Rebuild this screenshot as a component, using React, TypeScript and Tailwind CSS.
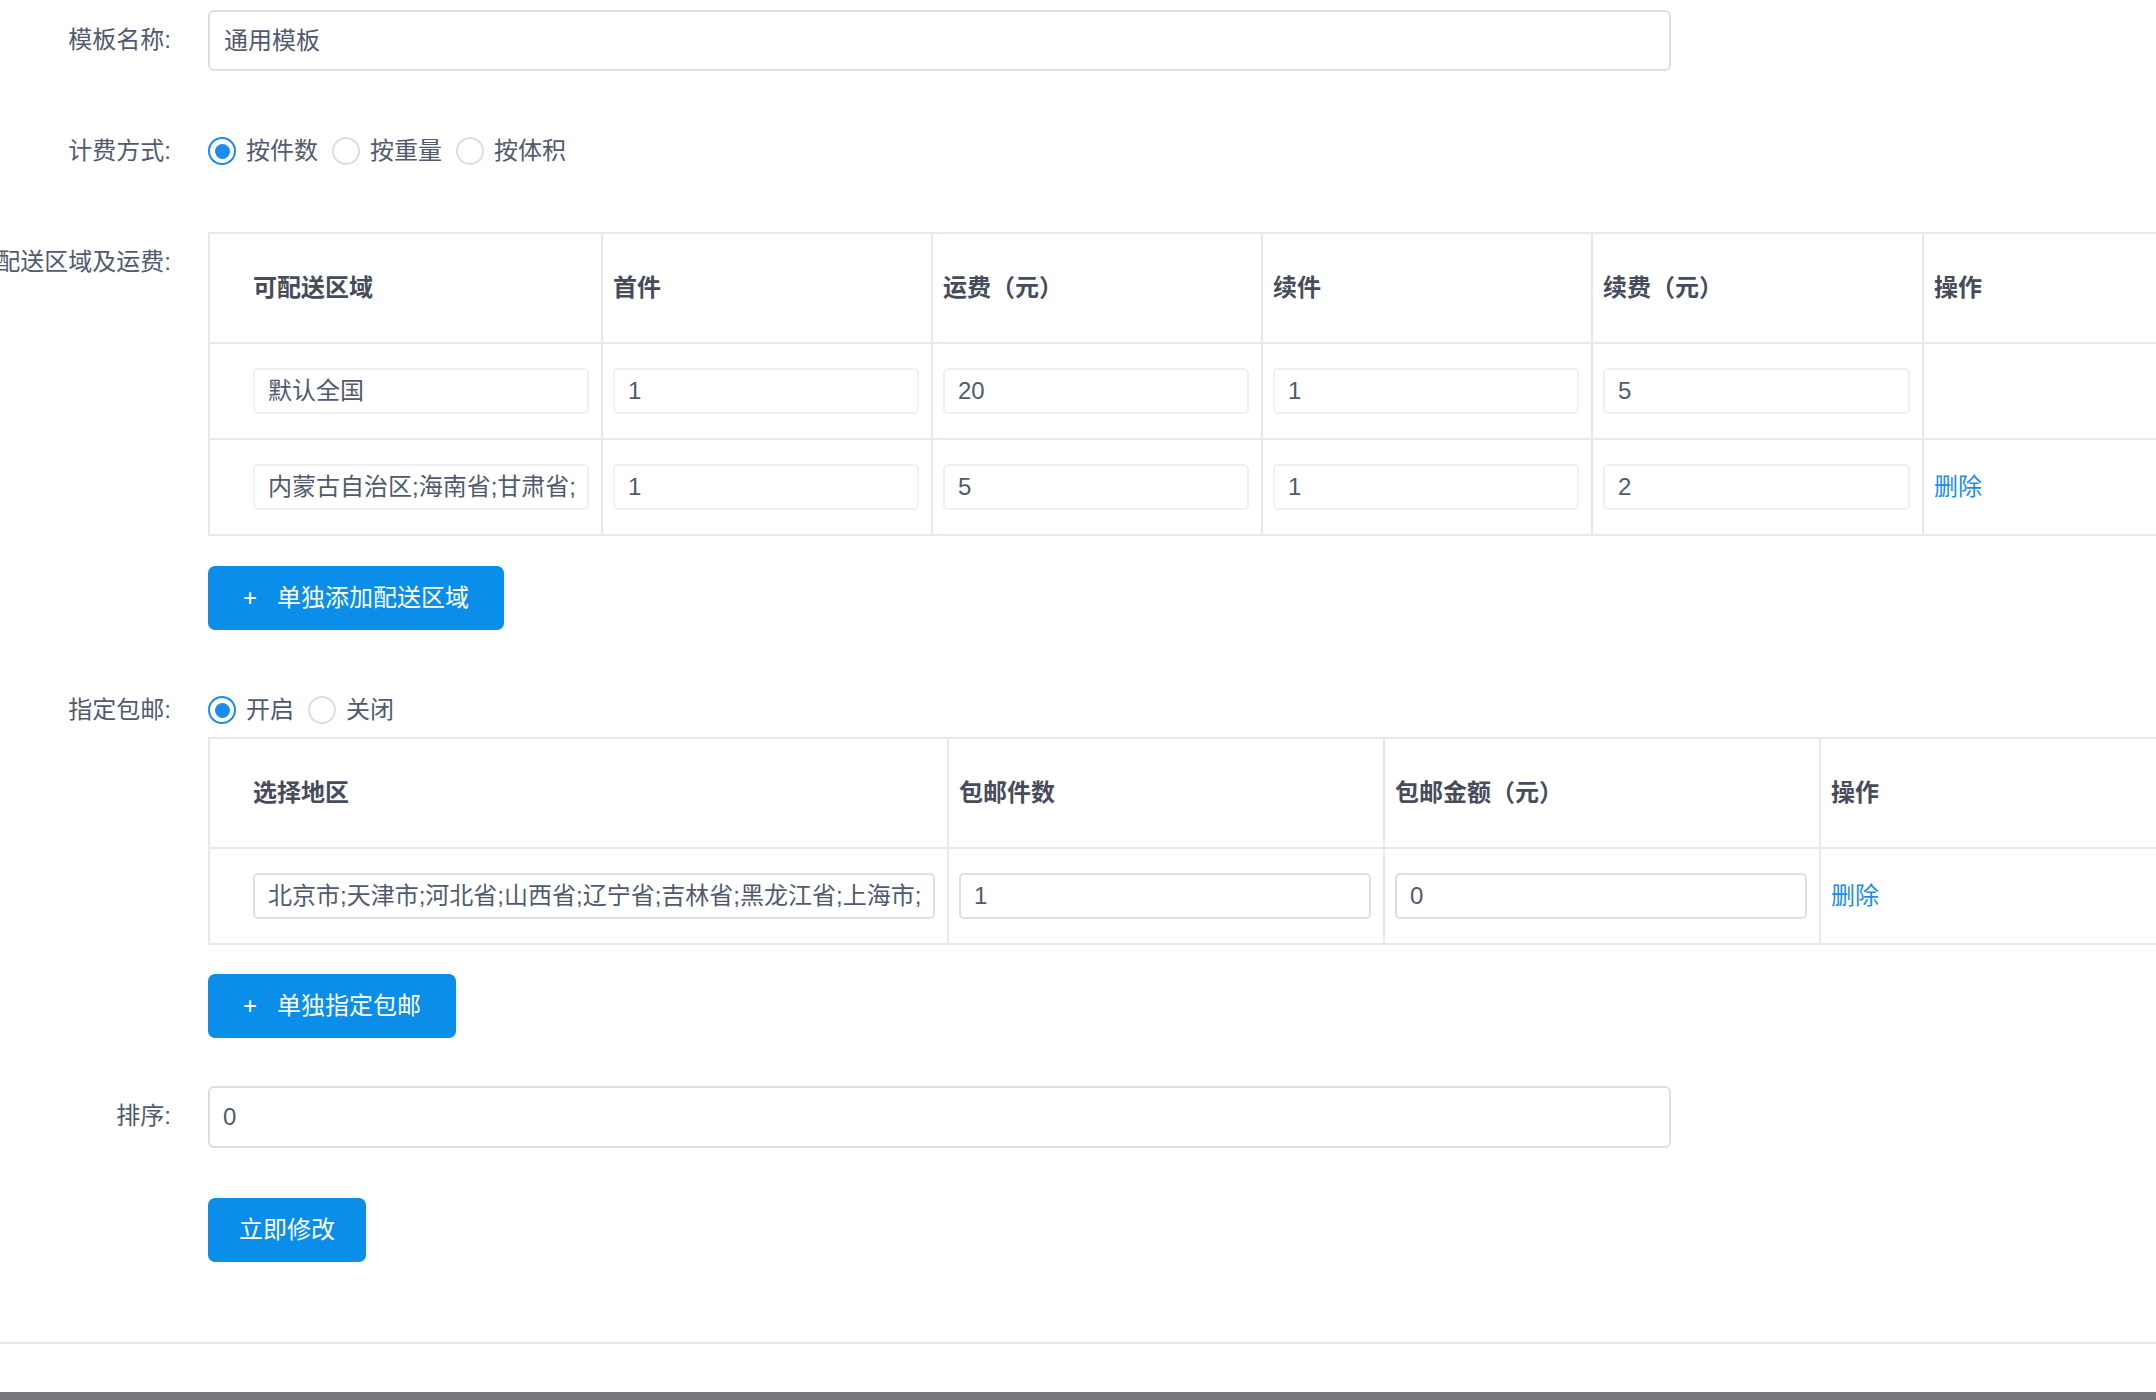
import { ReactNode } from 'react';

const text = 'text-[24px] text-[#515a6e]';

function FormItem({ label, className = '', children }: { label: string; className?: string; children: ReactNode }) {
  return (
    <div className={`flex ${className}`}>
      <div className={`w-[171px] shrink-0 flex justify-end whitespace-nowrap leading-[60px] mr-[37px] ${text}`}>
        {label}
      </div>
      <div className="min-w-0 flex-1">{children}</div>
    </div>
  );
}

function Radio({ checked, label }: { checked?: boolean; label: string }) {
  return (
    <span className="inline-flex items-center mr-[14px]">
      <span
        className={`w-[28px] h-[28px] rounded-full border-2 flex items-center justify-center ${
          checked ? 'border-[#1a8cf0]' : 'border-[#dcdee2]'
        }`}
      >
        {checked && <span className="w-[15px] h-[15px] rounded-full bg-[#1a8cf0]" />}
      </span>
      <span className={`ml-[10px] ${text}`}>{label}</span>
    </span>
  );
}

function CellInput({ value, strong }: { value: string; strong?: boolean }) {
  return (
    <div
      className={`w-full h-[46px] rounded-[5px] border-2 bg-white px-[13px] flex items-center overflow-hidden whitespace-nowrap ${text} ${
        strong ? 'border-[#dcdee2]' : 'border-[#eef0f3]'
      }`}
    >
      {value}
    </div>
  );
}

function Button({ children, className = '' }: { children: ReactNode; className?: string }) {
  return (
    <button
      className={`h-[64px] rounded-[7px] bg-[#0a8eea] text-white text-[24px] inline-flex items-center ${className}`}
    >
      {children}
    </button>
  );
}

const feeRows = [
  { area: '默认全国', first: '1', fee: '20', next: '1', nextFee: '5', del: false },
  { area: '内蒙古自治区;海南省;甘肃省;', first: '1', fee: '5', next: '1', nextFee: '2', del: true },
];

const th = 'h-[110px] border-2 border-[#e6e9ed] text-left align-middle font-semibold text-[24px] text-[#464c5b] pl-[10px] pr-[12px]';
const td = 'h-[96px] border-2 border-[#e6e9ed] align-middle pl-[10px] pr-[12px]';

export default function App() {
  return (
    <div className="relative h-[1400px] w-full overflow-hidden bg-white font-['Liberation_Sans','Noto_Sans_CJK_SC',sans-serif]">
      <div className="pt-[10px]">
        <FormItem label="模板名称:">
          <div className={`w-[1463px] h-[61px] rounded-[6px] border-2 border-[#dcdee2] px-[14px] flex items-center ${text}`}>
            通用模板
          </div>
        </FormItem>

        <FormItem label="计费方式:" className="mt-[50px]">
          <div className="h-[60px] flex items-center">
            <Radio checked label="按件数" />
            <Radio label="按重量" />
            <Radio label="按体积" />
          </div>
        </FormItem>

        <FormItem label="配送区域及运费:" className="mt-[51px]">
          <table className="table-fixed border-collapse w-[2044px]">
            <colgroup>
              <col className="w-[393px]" />
              <col className="w-[330px]" />
              <col className="w-[330px]" />
              <col className="w-[330px]" />
              <col className="w-[331px]" />
              <col className="w-[330px]" />
            </colgroup>
            <thead>
              <tr>
                <th className={`${th} pl-[43px]`}>可配送区域</th>
                <th className={th}>首件</th>
                <th className={th}>运费（元）</th>
                <th className={th}>续件</th>
                <th className={th}>续费（元）</th>
                <th className={th}>操作</th>
              </tr>
            </thead>
            <tbody>
              {feeRows.map((r) => (
                <tr key={r.area}>
                  <td className={`${td} pl-[43px]`}>
                    <CellInput value={r.area} />
                  </td>
                  <td className={td}>
                    <CellInput value={r.first} />
                  </td>
                  <td className={td}>
                    <CellInput value={r.fee} />
                  </td>
                  <td className={td}>
                    <CellInput value={r.next} />
                  </td>
                  <td className={td}>
                    <CellInput value={r.nextFee} />
                  </td>
                  <td className={td}>
                    {r.del && <a className="text-[24px] text-[#1a8cf0] cursor-pointer">删除</a>}
                  </td>
                </tr>
              ))}
            </tbody>
          </table>
          <Button className="mt-[30px] px-[35px]">
            <span className="mr-[20px]">+</span>单独添加配送区域
          </Button>
        </FormItem>

        <FormItem label="指定包邮:" className="mt-[50px]">
          <div className="h-[57px] pt-[3px] flex items-center">
            <Radio checked label="开启" />
            <Radio label="关闭" />
          </div>
          <table className="table-fixed border-collapse w-[2048px]">
            <colgroup>
              <col className="w-[739px]" />
              <col className="w-[436px]" />
              <col className="w-[436px]" />
              <col className="w-[437px]" />
            </colgroup>
            <thead>
              <tr>
                <th className={`${th} pl-[43px]`}>选择地区</th>
                <th className={th}>包邮件数</th>
                <th className={th}>包邮金额（元）</th>
                <th className={th}>操作</th>
              </tr>
            </thead>
            <tbody>
              <tr>
                <td className={`${td} pl-[43px] pr-[11px]`}>
                  <CellInput strong value="北京市;天津市;河北省;山西省;辽宁省;吉林省;黑龙江省;上海市;" />
                </td>
                <td className={`${td} pl-[9px] pr-[11px]`}>
                  <CellInput strong value="1" />
                </td>
                <td className={`${td} pl-[9px] pr-[11px]`}>
                  <CellInput strong value="0" />
                </td>
                <td className={`${td} pl-[9px] pr-[11px]`}>
                  <a className="text-[24px] text-[#1a8cf0] cursor-pointer">删除</a>
                </td>
              </tr>
            </tbody>
          </table>
          <Button className="mt-[29px] px-[35px]">
            <span className="mr-[20px]">+</span>单独指定包邮
          </Button>
        </FormItem>

        <FormItem label="排序:" className="mt-[48px]">
          <div className={`w-[1463px] h-[62px] rounded-[6px] border-2 border-[#dcdee2] px-[13px] flex items-center ${text}`}>
            0
          </div>
        </FormItem>

        <FormItem label="" className="mt-[50px]">
          <Button className="px-[31px]">立即修改</Button>
        </FormItem>

        <div className="mt-[80px] border-t-2 border-[#e5e9ed]" />
      </div>
      <div className="absolute bottom-0 left-0 h-[8px] w-full bg-[#76777a]" />
    </div>
  );
}
